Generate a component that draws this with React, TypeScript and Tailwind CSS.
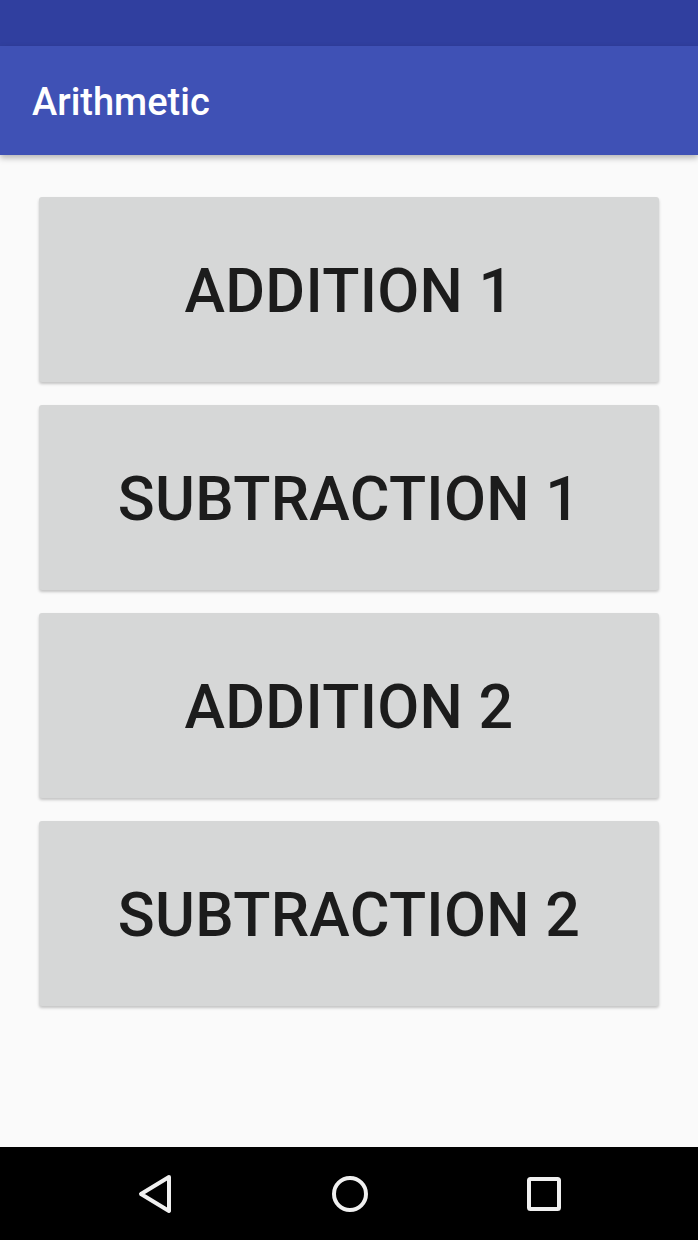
import React from 'react';

const buttons = ['Addition 1', 'Subtraction 1', 'Addition 2', 'Subtraction 2'];

export default function App() {
  return (
    <div className="h-[1240px] w-full flex flex-col bg-[#fafafa]" style={{ fontFamily: 'Roboto, "Noto Sans", sans-serif' }}>
      {/* status bar */}
      <div className="h-[46px] bg-[#303f9f] shrink-0" />

      {/* app bar */}
      <div className="relative z-10 h-[109px] shrink-0 bg-[#3f51b5] flex items-center px-[32px] pt-[2px] shadow-[0_3px_6px_rgba(0,0,0,0.28)]">
        <h1 className="text-white text-[38px] font-medium leading-none">Arithmetic</h1>
      </div>

      {/* content */}
      <main className="flex-1 flex flex-col gap-[23px] px-[39px] pt-[42px]">
        {buttons.map((b) => (
          <button
            key={b}
            className="h-[185px] w-full rounded-[3px] bg-[#d6d7d7] shadow-[0_2px_3px_rgba(0,0,0,0.22)] flex items-center justify-center pt-[4px] text-[#1c1c1c] text-[61px] font-medium uppercase tracking-[0.3px] leading-none"
          >
            {b}
          </button>
        ))}
      </main>

      {/* nav bar */}
      <div className="h-[93px] shrink-0 bg-black flex items-center">
        <div className="w-full flex items-center justify-between pl-[136px] pr-[136px]">
          <svg width="38" height="40" viewBox="0 0 38 40" fill="none" stroke="#f0f0f0" strokeWidth="4" strokeLinejoin="round" strokeLinecap="round">
            <path d="M33 3 L5 20 L33 37 Z" />
          </svg>
          <svg width="40" height="40" viewBox="0 0 40 40" fill="none" stroke="#f0f0f0" strokeWidth="4">
            <circle cx="20" cy="20" r="16" />
          </svg>
          <svg width="36" height="36" viewBox="0 0 36 36" fill="none" stroke="#f0f0f0" strokeWidth="4" strokeLinejoin="round">
            <rect x="3" y="3" width="30" height="30" rx="1.5" />
          </svg>
        </div>
      </div>
    </div>
  );
}
